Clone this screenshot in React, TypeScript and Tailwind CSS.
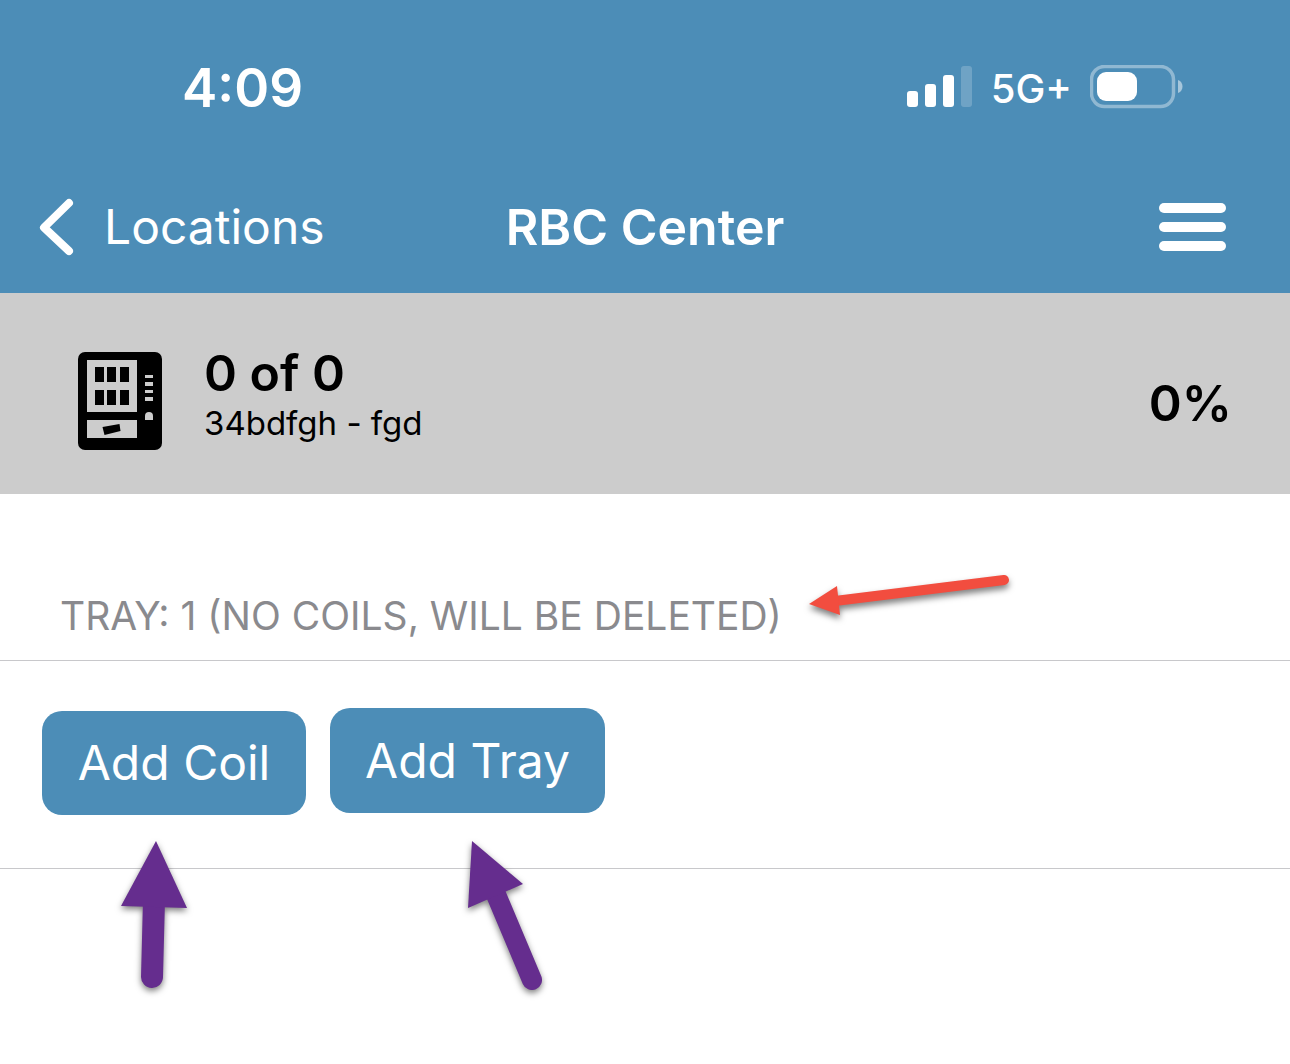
import React from "react";

function SignalIcon() {
  return (
    <svg width="66" height="42" viewBox="0 0 66 42" fill="white" aria-hidden="true">
      <rect x="0" y="25" width="11" height="16" rx="3" />
      <rect x="18" y="18" width="11" height="23" rx="3" />
      <rect x="36" y="9" width="11" height="32" rx="3" />
      <rect x="54" y="0" width="11" height="41" rx="3" opacity="0.2" />
    </svg>
  );
}

function BatteryIcon() {
  return (
    <svg width="94" height="44" viewBox="0 0 94 44" fill="none" aria-hidden="true">
      <rect x="1.5" y="1.5" width="82" height="40" rx="13" stroke="white" strokeOpacity="0.38" strokeWidth="3.5" />
      <rect x="7" y="7" width="40" height="29" rx="9" fill="white" />
      <path d="M88 15c6 2 6 11 0 13z" fill="white" opacity="0.5" />
    </svg>
  );
}

function VendingIcon() {
  return (
    <svg width="84" height="98" viewBox="0 0 84 98" aria-hidden="true" className="shrink-0">
      <rect width="84" height="98" rx="7" fill="black" />
      <g fill="#cccccc">
        <rect x="9" y="8" width="50" height="52" />
        <rect x="9" y="68" width="50" height="18" />
        <rect x="67" y="23" width="8" height="3" />
        <rect x="67" y="30" width="8" height="4" />
        <rect x="67" y="38" width="8" height="3" />
        <rect x="67" y="45" width="8" height="4" />
        <path d="M67 68v-4a4 4 0 0 1 8 0v4z" />
      </g>
      <g fill="black">
        <rect x="17" y="15" width="9" height="15" />
        <rect x="29" y="15" width="9" height="15" />
        <rect x="42" y="15" width="9" height="15" />
        <rect x="17" y="38" width="9" height="15" />
        <rect x="29" y="38" width="9" height="15" />
        <rect x="42" y="38" width="9" height="15" />
        <path d="M24.500 75l17-3 1 7-16 4z" />
      </g>
    </svg>
  );
}

function RedArrow() {
  return (
    <svg
      width="230"
      height="70"
      viewBox="0 0 230 70"
      aria-hidden="true"
      className="absolute left-[795px] top-[66px] drop-shadow-[0_4px_3px_rgba(0,0,0,0.5)]"
    >
      <path d="M209 20L40 41" stroke="#f24d3f" strokeWidth="10" strokeLinecap="round" />
      <path d="M14 44L42 26L45 55z" fill="#f24d3f" />
    </svg>
  );
}

function CoilArrow() {
  return (
    <svg
      width="90"
      height="170"
      viewBox="0 0 90 170"
      aria-hidden="true"
      className="absolute left-[110px] top-[169px] drop-shadow-[0_3px_3px_rgba(0,0,0,0.5)]"
    >
      <path d="M42 147L44 70" stroke="#652d8e" strokeWidth="22" strokeLinecap="round" />
      <path d="M46 11L77 78L11 76z" fill="#652d8e" />
    </svg>
  );
}

function TrayArrow() {
  return (
    <svg
      width="110"
      height="175"
      viewBox="0 0 110 175"
      aria-hidden="true"
      className="absolute left-[450px] top-[169px] drop-shadow-[0_3px_3px_rgba(0,0,0,0.5)]"
    >
      <path d="M82 150L42 55" stroke="#652d8e" strokeWidth="20" strokeLinecap="round" />
      <path d="M22 11L73 54L18 78z" fill="#652d8e" />
    </svg>
  );
}

export default function App() {
  return (
    <div className="min-h-screen bg-white font-['Inter',sans-serif] text-black">
      <header className="bg-[#4c8db7] text-white">
        <div className="flex h-40 items-start justify-between pl-[182px] pr-[106px] pt-14">
          <time className="text-[53px] font-semibold leading-16">4:09</time>
          <div className="flex h-[62px] items-center gap-[18px]">
            <SignalIcon />
            <span className="pt-1 text-[40px] font-medium leading-14">5G+</span>
            <BatteryIcon />
          </div>
        </div>
        <nav className="grid h-[133px] grid-cols-[1fr_auto_1fr] items-center px-9">
          <a href="#locations" className="flex items-center gap-7 justify-self-start text-[48px] leading-16">
            <svg width="40" height="60" viewBox="0 0 40 60" fill="none" aria-hidden="true">
              <path
                d="M33 6L8 30.500L33 54"
                stroke="white"
                strokeWidth="8"
                strokeLinecap="round"
                strokeLinejoin="round"
              />
            </svg>
            Locations
          </a>
          <h1 className="text-[50px] font-semibold leading-16">RBC Center</h1>
          <button type="button" aria-label="Menu" className="mr-7 justify-self-end">
            <svg width="67" height="48" viewBox="0 0 67 48" fill="white" aria-hidden="true">
              <rect width="67" height="10" rx="5" />
              <rect y="19" width="67" height="10" rx="5" />
              <rect y="38" width="67" height="10" rx="5" />
            </svg>
          </button>
        </nav>
      </header>

      <section className="flex h-[201px] items-center justify-between bg-[#cccccc] pl-[78px] pr-[58px] pt-[14px]">
        <div className="flex items-center gap-[42px]">
          <VendingIcon />
          <div className="pb-3">
            <p className="text-[50px] font-semibold leading-14">0 of 0</p>
            <p className="text-[33px] leading-11">34bdfgh - fgd</p>
          </div>
        </div>
        <p className="pt-1 text-[50px] font-semibold leading-14">0%</p>
      </section>

      <main>
        <div className="relative border-b border-[#c8c8cb] pb-5 pl-[60px] pt-[98px]">
          <h2 className="text-[39px] leading-12 text-[#8a8a8e]">TRAY: 1 (NO COILS, WILL BE DELETED)</h2>
          <RedArrow />
        </div>
        <div className="relative flex h-52 items-start gap-6 border-b border-[#c8c8cb] pl-[42px] pt-[47px]">
          <button type="button" className="mt-[3px] h-26 w-66 rounded-[20px] bg-[#4c8db7] text-[48px] text-white">
            Add Coil
          </button>
          <button type="button" className="h-[105px] w-[275px] rounded-[20px] bg-[#4c8db7] text-[48px] text-white">
            Add Tray
          </button>
          <CoilArrow />
          <TrayArrow />
        </div>
      </main>
    </div>
  );
}
